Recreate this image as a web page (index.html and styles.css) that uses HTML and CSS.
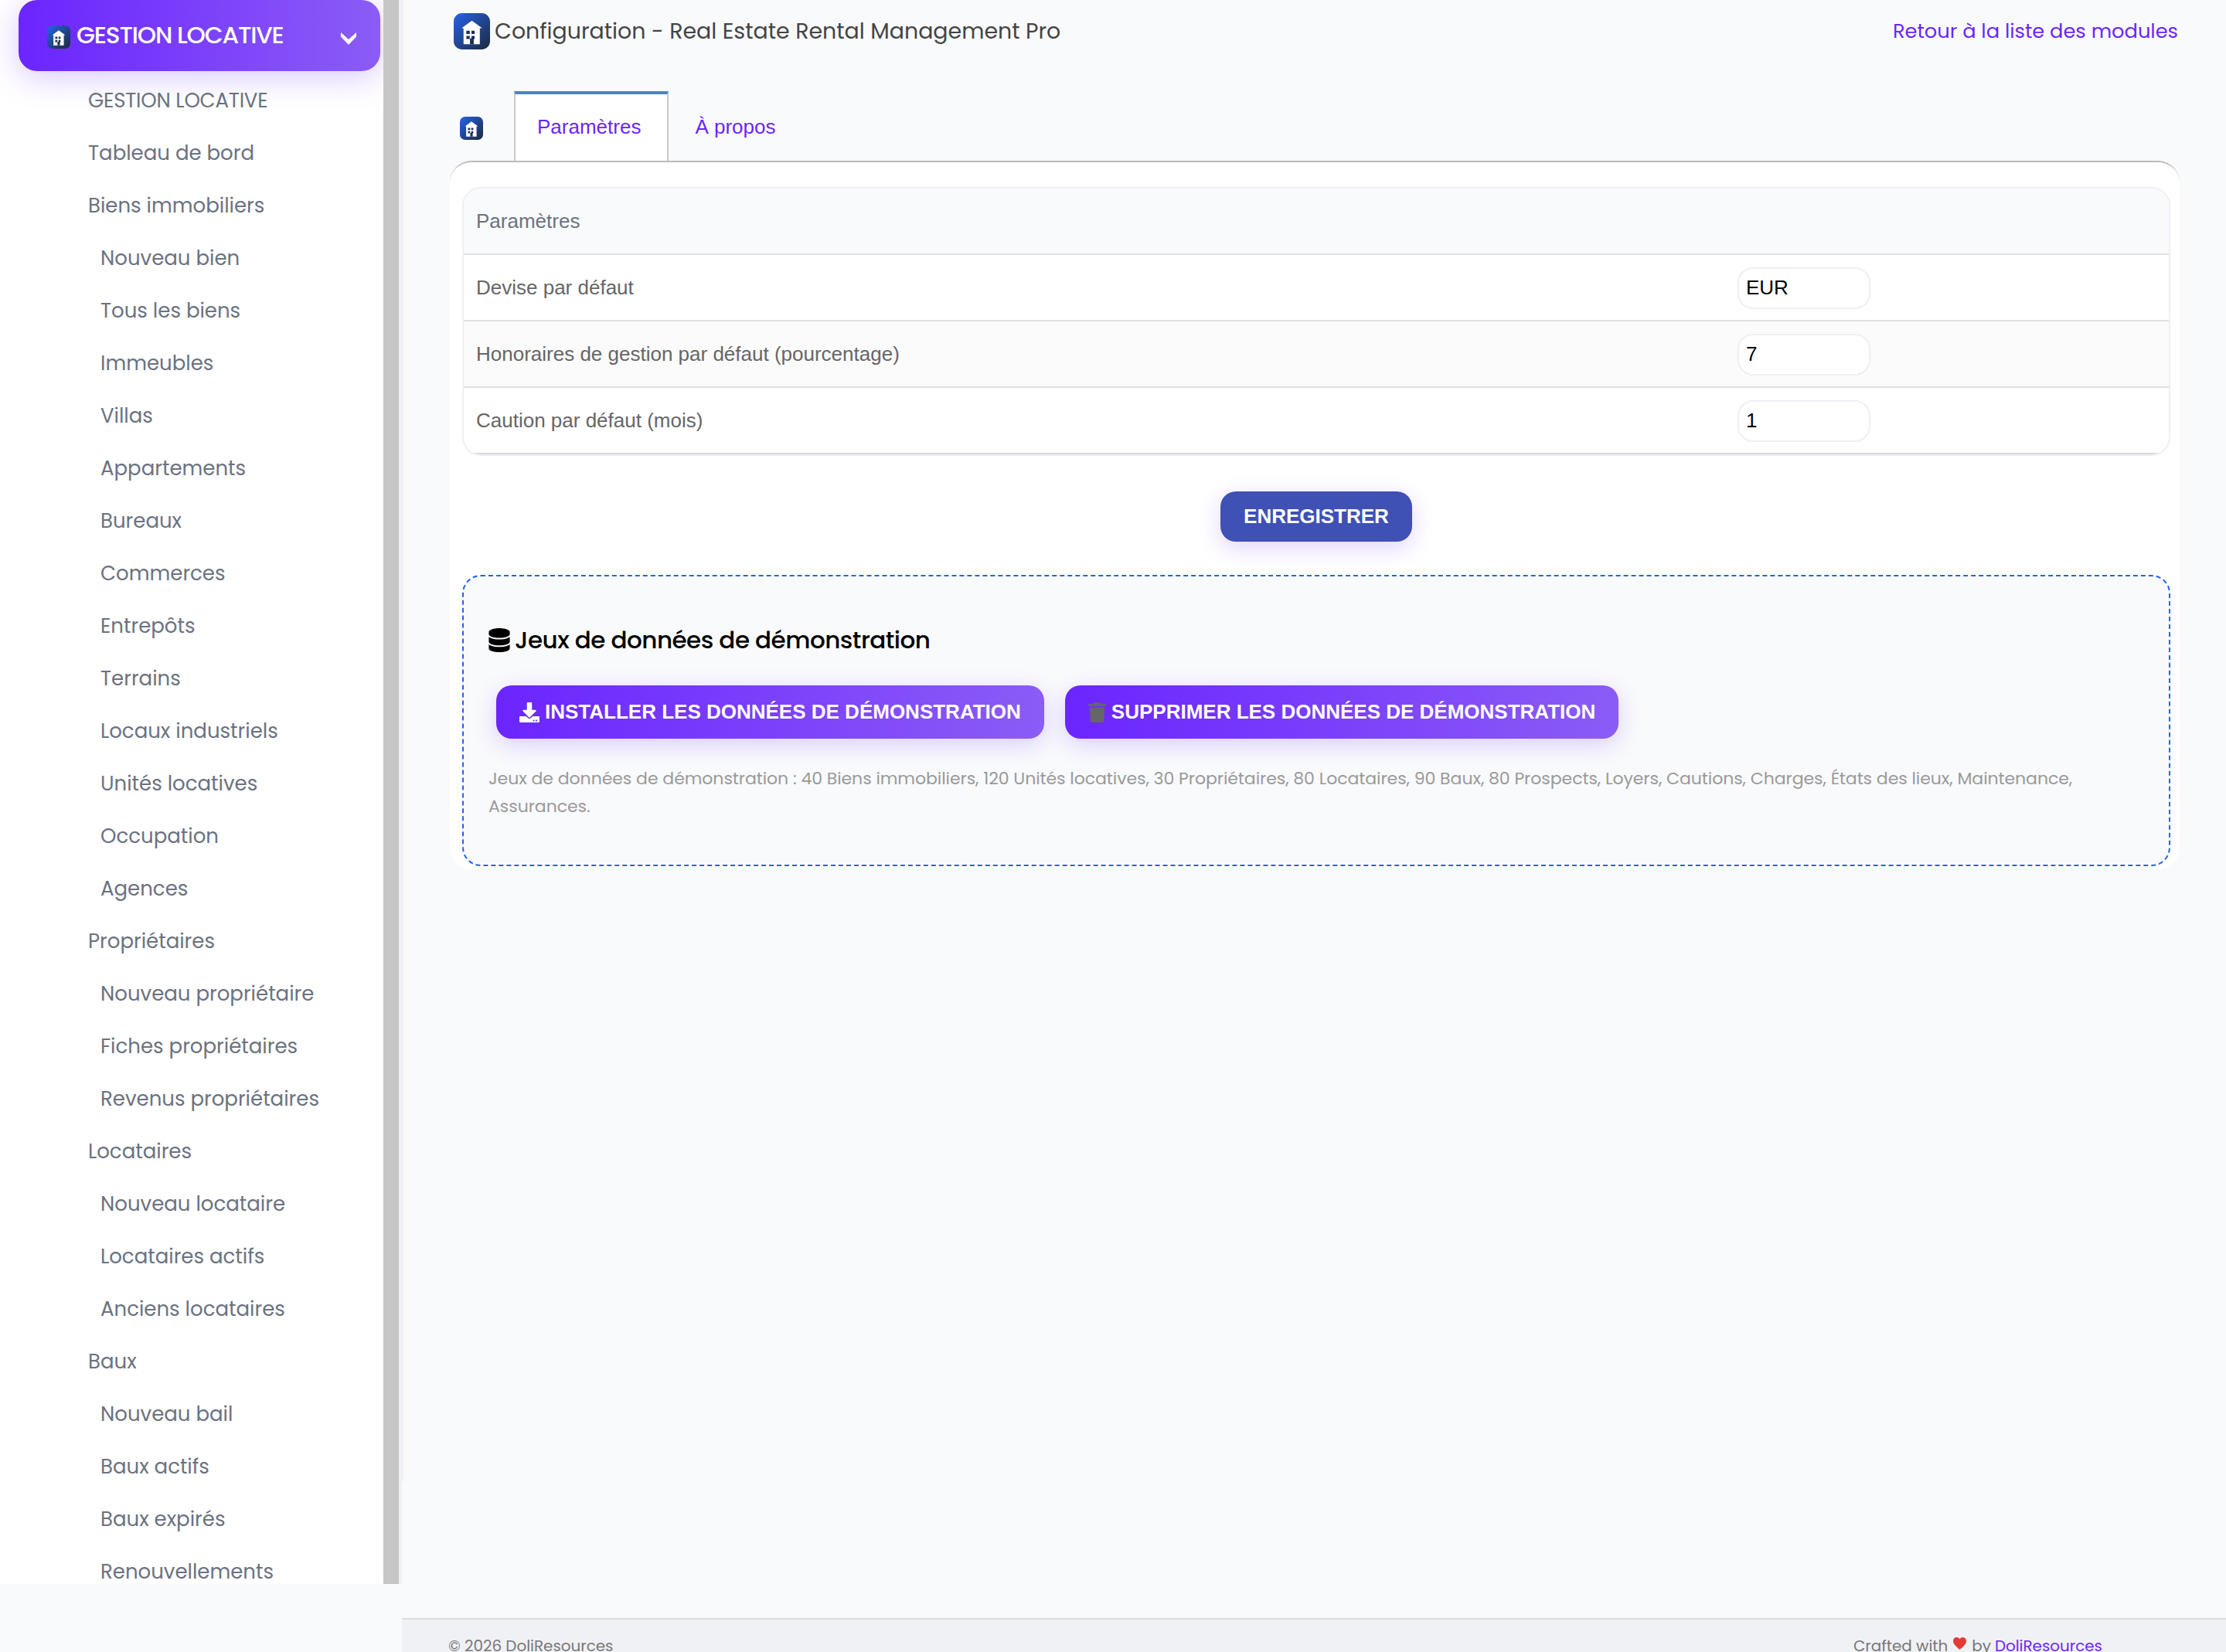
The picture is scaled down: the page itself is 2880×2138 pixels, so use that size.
FILE: index.html
```html
<!DOCTYPE html>
<html lang="fr">
<head>
<meta charset="utf-8">
<title>Configuration - Real Estate Rental Management Pro</title>
<link rel="stylesheet" href="styles.css">
</head>
<body>
<svg class="defs" width="0" height="0" aria-hidden="true">
  <defs>
    <linearGradient id="tile" x1="0" y1="0" x2="1" y2="1">
      <stop offset="0" stop-color="#2563eb"/>
      <stop offset="1" stop-color="#1e293b"/>
    </linearGradient>
    <symbol id="house" viewBox="0 0 48 48">
      <rect width="48" height="48" rx="11" fill="url(#tile)"/>
      <path fill="#fff" d="M24 10 37 19.500V20H34.500V41H13V20H11V19.500Z"/>
      <path fill="#1e2f55" d="M16.700 23.300h4.500v4.200h-4.500zM23.500 23.300h4.200v4.200h-4.200zM16.700 30h4.500v4.200h-4.500zM23.500 30h4.200v4.200h-4.200zM21.500 33.500h5v7.500h-5z"/>
    </symbol>
  </defs>
</svg>
<div class="app">
  <aside class="sidebar">
    <div class="sidebar-scroll">
      <div class="module-title">
        <svg class="module-icon"><use href="#house"/></svg>
        <span class="module-name">GESTION LOCATIVE</span>
        <svg class="chevron" viewBox="0 0 20 16"><path d="M0 0 10 9 20 0V5.500L10 16 0 5.500Z" fill="#fff"/></svg>
      </div>
      <nav class="menu">
        <a class="item caps">GESTION LOCATIVE</a>
        <a class="item">Tableau de bord</a>
        <a class="item">Biens immobiliers</a>
        <a class="item sub">Nouveau bien</a>
        <a class="item sub">Tous les biens</a>
        <a class="item sub">Immeubles</a>
        <a class="item sub">Villas</a>
        <a class="item sub">Appartements</a>
        <a class="item sub">Bureaux</a>
        <a class="item sub">Commerces</a>
        <a class="item sub">Entrepôts</a>
        <a class="item sub">Terrains</a>
        <a class="item sub">Locaux industriels</a>
        <a class="item sub">Unités locatives</a>
        <a class="item sub">Occupation</a>
        <a class="item sub">Agences</a>
        <a class="item">Propriétaires</a>
        <a class="item sub">Nouveau propriétaire</a>
        <a class="item sub">Fiches propriétaires</a>
        <a class="item sub">Revenus propriétaires</a>
        <a class="item">Locataires</a>
        <a class="item sub">Nouveau locataire</a>
        <a class="item sub">Locataires actifs</a>
        <a class="item sub">Anciens locataires</a>
        <a class="item">Baux</a>
        <a class="item sub">Nouveau bail</a>
        <a class="item sub">Baux actifs</a>
        <a class="item sub">Baux expirés</a>
        <a class="item sub">Renouvellements</a>
      </nav>
    </div>
    <div class="scrollbar"></div>
    <div class="edge"></div>
  </aside>
  <div class="edge-outer"></div>
  <div class="page">
    <main class="content">
      <header class="title-bar">
        <svg class="title-icon"><use href="#house"/></svg>
        <h1 class="title">Configuration - Real Estate Rental Management Pro</h1>
        <a class="back">Retour à la liste des modules</a>
      </header>
      <div class="tabs">
        <svg class="tab-icon"><use href="#house"/></svg>
        <a class="tab active">Paramètres</a>
        <a class="tab">À propos</a>
      </div>
      <section class="panel">
        <div class="table">
          <div class="row head"><span class="label">Paramètres</span></div>
          <div class="row"><span class="label">Devise par défaut</span><input class="field" value="EUR"></div>
          <div class="row odd"><span class="label">Honoraires de gestion par défaut (pourcentage)</span><input class="field" value="7"></div>
          <div class="row last"><span class="label">Caution par défaut (mois)</span><input class="field" value="1"></div>
        </div>
        <button class="save">ENREGISTRER</button>
        <div class="demo">
          <h2 class="demo-title">
            <svg class="db" viewBox="0 0 448 512"><path d="M448 80v48c0 44.200-100.300 80-224 80S0 172.200 0 128V80C0 35.800 100.300 0 224 0S448 35.800 448 80zM393.200 214.700c20.800-7.400 39.900-16.900 54.800-28.600V288c0 44.200-100.300 80-224 80S0 332.200 0 288V186.100c14.900 11.800 34 21.200 54.800 28.600C99.700 230.700 159.500 240 224 240s124.300-9.300 169.200-25.300zM0 346.100c14.900 11.800 34 21.200 54.800 28.600C99.700 390.700 159.500 400 224 400s124.300-9.300 169.200-25.300c20.800-7.400 39.900-16.900 54.800-28.600V432c0 44.200-100.300 80-224 80S0 476.200 0 432V346.100z"/></svg>
            <span class="demo-name">Jeux de données de démonstration</span>
          </h2>
          <div class="actions">
            <button class="action">
              <svg class="dl" viewBox="0 0 512 512"><path fill="#fff" d="M216 0h80c13.300 0 24 10.700 24 24v168h87.700c17.800 0 26.700 21.500 14.100 34.100L269.700 378.300c-7.500 7.500-19.800 7.500-27.300 0L90.100 226.100c-12.600-12.600-3.700-34.100 14.100-34.100H192V24c0-13.300 10.700-24 24-24zm296 376v112c0 13.300-10.700 24-24 24H24c-13.300 0-24-10.700-24-24V376c0-13.300 10.700-24 24-24h146.700l49 49c20.100 20.100 52.500 20.100 72.600 0l49-49H488c13.300 0 24 10.700 24 24zm-124 88c0-11-9-20-20-20s-20 9-20 20 9 20 20 20 20-9 20-20zm64 0c0-11-9-20-20-20s-20 9-20 20 9 20 20 20 20-9 20-20z"/></svg>
              <span>INSTALLER LES DONNÉES DE DÉMONSTRATION</span>
            </button>
            <button class="action">
              <svg class="trash" viewBox="0 0 448 512"><path fill="#666" d="M432 32H312l-9.400-18.700A24 24 0 0 0 281.100 0H166.800a23.700 23.700 0 0 0-21.400 13.300L136 32H16A16 16 0 0 0 0 48v32a16 16 0 0 0 16 16h416a16 16 0 0 0 16-16V48a16 16 0 0 0-16-16zM53.200 467a48 48 0 0 0 47.900 45h245.800a48 48 0 0 0 47.900-45L416 128H32z"/></svg>
              <span>SUPPRIMER LES DONNÉES DE DÉMONSTRATION</span>
            </button>
          </div>
          <p class="note"><span class="note-line">Jeux de données de démonstration : 40 Biens immobiliers, 120 Unités locatives, 30 Propriétaires, 80 Locataires, 90 Baux, 80 Prospects, Loyers, Cautions, Charges, États des lieux, Maintenance,</span> <span class="note-line">Assurances.</span></p>
        </div>
      </section>
    </main>
    <footer class="footer">
      <span class="copy">© 2026 DoliResources</span>
      <span class="credit"><span>Crafted with</span>
        <svg class="heart" viewBox="0 0 17 16"><path fill="#e53935" d="M8.500 16C5 12.500 0 9.500 0 4.800 0 2 2 0 4.500 0 6.200 0 7.600.8 8.500 2.200 9.400.8 10.800 0 12.500 0 15 0 17 2 17 4.800 17 9.500 12 12.500 8.500 16Z"/></svg>
        <span class="by">by</span> <a class="brand">DoliResources</a></span>
    </footer>
  </div>
</div>
</body>
</html>
```
FILE: styles.css
```css
* { box-sizing: border-box; }
body {
  margin: 0;
  background: #f9fafc;
  font-family: Poppins, Inter, sans-serif;
  overflow: hidden;
}
.defs { position: absolute; }
svg { flex: none; display: block; }
.app { display: flex; height: 2138px; }

/* Sidebar */
.sidebar { display: flex; width: 520px; height: 2050px; flex: none; background: #fff; overflow: hidden; }
.sidebar-scroll { width: 496px; padding: 0 4px 0 24px; }
.module-title {
  display: flex; align-items: center; height: 92px; padding: 0 31px 0 37px;
  border-radius: 24px; color: #fff;
  background: linear-gradient(90deg, #6b25ff, #8b5cf6);
  box-shadow: 0 8px 40px rgba(107, 37, 255, .25);
}
.module-icon { width: 30px; height: 30px; margin-top: 4px; }
.module-name { flex: 1; margin: -2px 0 0 8px; font-size: 31px; font-weight: 500; letter-spacing: -1.17px; white-space: nowrap; }
.chevron { width: 20px; height: 16px; margin-top: 7px; }
.menu { display: flex; flex-direction: column; padding: 4px 0 0 90px; }
.item { height: 68px; line-height: 68px; font-size: 26px; color: #6b7280; white-space: nowrap; }
.caps { letter-spacing: -.2px; }
.sub { padding-left: 16px; }
.scrollbar { width: 20px; background: #c6c6c6; }
.edge { width: 4px; background: #f0f0f5; }
.edge-outer { width: 2px; height: 1917px; margin-right: -2px; flex: none; background: #f0f0f5; }

/* Main column */
.page { display: flex; flex-direction: column; flex: 1; min-width: 0; }
.content { flex: 1; padding: 16px 60px 0 62px; }
.title-bar { display: flex; align-items: center; height: 48px; padding: 0 2px 0 5px; }
.title-icon { width: 47px; height: 47px; }
.title { flex: 1; margin: 1px 0 0 6px; font-size: 28.4px; font-weight: 400; color: #444; white-space: nowrap; }
.back { font-size: 25.7px; color: #6b25ff; white-space: nowrap; }

.tabs { display: flex; height: 90px; margin-top: 54px; font: 26px "Liberation Sans", Arial, sans-serif; }
.tab-icon { width: 30px; height: 30px; margin: 33px 40px 0 13px; }
.tab { padding: 4px 33px 0 34px; line-height: 84px; color: #6b25ff; border: 0 solid #c8c8c8; }
.active { padding: 0 34px 0 28px; background: #fff; border-width: 4px 2px 0; border-top-color: #4f81c5; }

.panel {
  display: flex; flex-direction: column; height: 917px; padding: 32px 12px 4px 16px;
  background: #fff; border-top: 2px solid #bbb; border-radius: 28px;
}
.table { border: 2px solid #efeff4; border-radius: 24px; overflow: hidden; font: 26px "Liberation Sans", Arial, sans-serif; color: #666; }
.row { display: grid; grid-template-columns: 1632px 1fr; align-items: center; height: 86px; padding-left: 16px; border-bottom: 2px solid #e0e0e0; }
.head { background: #f9fafc; color: #6b7280; }
.odd { background: #fbfbfb; }
.last { border-bottom-color: #d8d8d8; }
.label { line-height: 30px; }
.field { width: 172px; height: 54px; margin-top: 2px; padding: 0 9px 2px; border: 2px solid #efeff4; border-radius: 20px; background: #fff; font: inherit; color: #000; }

.save, .action { border: 0; color: #fff; font: bold 26px "Liberation Sans", Arial, sans-serif; white-space: nowrap; }
.save { align-self: center; width: 248px; height: 66px; margin-top: 46px; padding: 0; border-radius: 20px; background: #3f51b5; box-shadow: 0 8px 30px rgba(107, 37, 255, .2); }

.demo { height: 377px; margin-top: 43px; padding: 56px 32px 0; border: 2px dashed #2563eb; border-radius: 24px; background: #f9fafc; }
.demo-title { display: flex; align-items: center; height: 52px; margin: 0; font-size: 31px; font-weight: 500; letter-spacing: -.5px; color: #000; }
.db { width: 28px; height: 31px; margin-right: 6px; }
.actions { display: flex; gap: 27px; margin-top: 33px; padding-left: 10px; }
.action { display: flex; align-items: center; height: 69px; padding: 0 30px; border-radius: 20px; background: linear-gradient(90deg, #6b25ff, #8b5cf6); box-shadow: 0 8px 30px rgba(107, 37, 255, .2); }
.dl { width: 26px; height: 26px; margin-right: 7px; }
.trash { width: 23px; height: 26px; margin-right: 7px; }
.note { margin: 34px 0 0; font-size: 22px; line-height: 36px; letter-spacing: -.053px; color: #999; white-space: nowrap; }
.note-line { display: block; }

.footer { display: flex; justify-content: space-between; height: 44px; padding: 17px 160px 0 60px; overflow: hidden; border-top: 2px solid #ddd; background: #f0f1f5; font-size: 19.9px; line-height: 34px; color: #777; white-space: nowrap; }
.credit { display: flex; gap: 7px; }
.by { margin-right: -2px; }
.heart { width: 17px; height: 16px; margin-top: 6px; }
.brand { color: #6b25ff; }
```
